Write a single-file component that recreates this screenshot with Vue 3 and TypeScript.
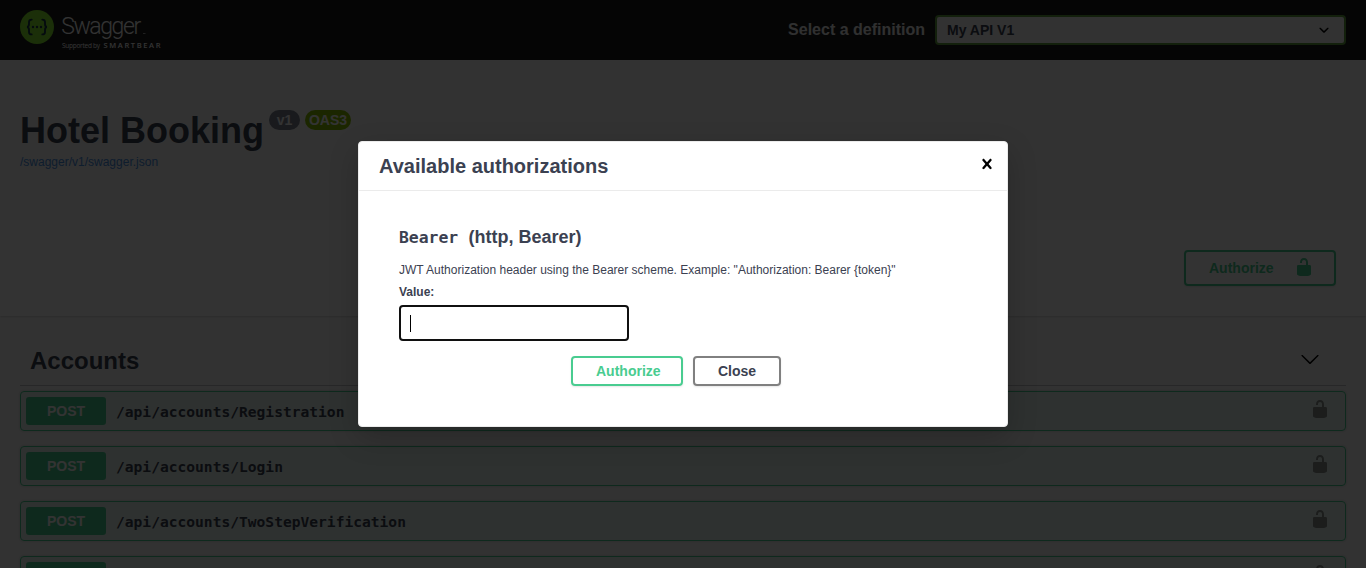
<script setup lang="ts">
interface Operation {
  id: number
  method: string
  path: string
}

const operations: Operation[] = [
  { id: 1, method: 'POST', path: '/api/accounts/Registration' },
  { id: 2, method: 'POST', path: '/api/accounts/Login' },
  { id: 3, method: 'POST', path: '/api/accounts/TwoStepVerification' },
  { id: 4, method: '', path: '' },
]

const unlocked =
  'M15.8 8H14V5.6C14 2.703 12.665 1 10 1 7.334 1 6 2.703 6 5.6V6h2v-.801C8 3.754 8.797 3 10 3c1.203 0 2 .754 2 2.199V8H4c-.553 0-1 .646-1 1.199V17c0 .549.428 1.139.951 1.307l1.197.387C5.672 18.861 6.55 19 7.1 19h5.8c.549 0 1.428-.139 1.951-.307l1.196-.387c.524-.167.953-.757.953-1.306V9.199C17 8.646 16.352 8 15.8 8z'
</script>

<template>
  <div class="page">
    <header class="topbar">
      <svg class="logo" width="150" height="44" viewBox="0 0 150 44">
        <circle cx="17" cy="17" r="17" fill="#85ea2d" />
        <g fill="none" stroke="#173647" stroke-width="1.9" stroke-linecap="round">
          <path d="M11.7 9.6c-2.4 0-2.7.9-2.7 2.5v2c0 1.700-.6 2.700-1.900 2.900 1.300.2 1.900 1.200 1.900 2.900v2c0 1.600.3 2.500 2.700 2.500" />
          <path d="M22.300 9.600c2.400 0 2.700.9 2.700 2.500v2c0 1.700.6 2.700 1.900 2.900-1.300.2-1.900 1.200-1.900 2.900v2c0 1.600-.3 2.500-2.700 2.500" />
        </g>
        <g fill="#173647">
          <circle cx="13" cy="17" r="1.200" />
          <circle cx="17" cy="17" r="1.200" />
          <circle cx="21" cy="17" r="1.200" />
        </g>
        <text class="brand" x="41.200" y="24" textLength="80">Swagger</text>
        <rect x="123" y="23" width="2.500" height="1" fill="#999" />
        <text class="sub" x="42" y="38" textLength="38">Supported by</text>
        <text class="sub bear" x="83.500" y="38" textLength="57">SMARTBEAR</text>
      </svg>
      <div class="definition">
        <span class="definition-label">Select a definition</span>
        <div class="select">
          <span>My API V1</span>
          <svg width="20" height="20" viewBox="0 0 20 20">
            <path d="M13.418 7.859c.271-.268.709-.268.978 0 .27.268.272.701 0 .969l-3.908 3.830c-.27.268-.707.268-.979 0l-3.908-3.830c-.27-.267-.27-.701 0-.969.271-.268.709-.268.978 0L10 11l3.418-3.141z" />
          </svg>
        </div>
      </div>
    </header>

    <section class="info">
      <div class="title-row">
        <h2>Hotel Booking</h2>
        <span class="pill">v1</span>
        <span class="pill oas">OAS3</span>
      </div>
      <a class="spec">/swagger/v1/swagger.json</a>
    </section>

    <section class="scheme">
      <button class="btn green main-auth">
        <span>Authorize</span>
        <svg width="20" height="20" viewBox="0 0 20 20"><path :d="unlocked" /></svg>
      </button>
    </section>

    <section class="tag">
      <div class="tag-head">
        <h3>Accounts</h3>
        <svg width="20" height="20" viewBox="0 0 20 20">
          <path d="M17.418 6.109c.272-.268.709-.268.979 0s.271.701 0 .969l-7.908 7.830c-.27.268-.707.268-.979 0l-7.908-7.830c-.27-.268-.27-.701 0-.969.271-.268.709-.268.979 0L10 13.250l7.418-7.141z" />
        </svg>
      </div>
      <div v-for="op in operations" :key="op.id" class="op">
        <span class="method">{{ op.method }}</span>
        <span class="path">{{ op.path }}</span>
        <svg width="20" height="20" viewBox="0 0 20 20"><path :d="unlocked" /></svg>
      </div>
    </section>

    <div class="backdrop">
      <div class="modal">
        <div class="modal-head">
          <h3>Available authorizations</h3>
          <svg width="20" height="20" viewBox="0 0 20 20">
            <path d="M14.348 14.849c-.469.469-1.229.469-1.697 0L10 11.819l-2.651 3.029c-.469.469-1.229.469-1.697 0-.469-.469-.469-1.229 0-1.697l2.758-3.150-2.759-3.152c-.469-.469-.469-1.228 0-1.697s1.228-.469 1.697 0L10 8.183l2.651-3.031c.469-.469 1.228-.469 1.697 0s.469 1.229 0 1.697l-2.758 3.152 2.758 3.150c.469.469.469 1.229 0 1.698z" />
          </svg>
        </div>
        <div class="modal-body">
          <h4><code>Bearer</code><span>(http, Bearer)</span></h4>
          <p>JWT Authorization header using the Bearer scheme. Example: "Authorization: Bearer {token}"</p>
          <label>Value:</label>
          <div class="field"><span class="caret"></span></div>
          <div class="actions">
            <button class="btn green">Authorize</button>
            <button class="btn">Close</button>
          </div>
        </div>
      </div>
    </div>
  </div>
</template>

<style>
body {
  margin: 0;
  overflow: hidden;
}
</style>

<style scoped>
* {
  box-sizing: border-box;
}
.page {
  position: relative;
  height: 568px;
  overflow: hidden;
  background: #fafafa;
  color: #3b4151;
  font-family: "Liberation Sans", Arial, sans-serif;
}
h2,
h3,
h4,
p {
  margin: 0;
}
svg {
  display: block;
  flex: none;
}
.topbar {
  height: 60px;
  padding: 10px 20px 0;
  background: #1b1b1b;
  display: flex;
  justify-content: space-between;
}
.brand {
  font: 300 23px Roboto, sans-serif;
  fill: #fff;
}
.sub {
  font: 400 6.5px "Open Sans", sans-serif;
  fill: #fff;
}
.bear {
  font-size: 7.5px;
  font-weight: 600;
}
.definition {
  display: flex;
  align-items: center;
  height: 40px;
}
.definition-label {
  margin-right: 10px;
  color: #f0f0f0;
  font-size: 16px;
  font-weight: 700;
}
.select {
  width: 411px;
  height: 30px;
  padding: 0 10px;
  border: 2px solid #62a03f;
  border-radius: 4px;
  background: #f7f7f7;
  display: flex;
  align-items: center;
  justify-content: space-between;
  font-size: 14px;
  font-weight: 700;
}
.info {
  height: 160px;
  padding: 50px 20px 0;
}
.title-row {
  display: flex;
  align-items: flex-start;
}
h2 {
  font-size: 36px;
  line-height: 42px;
  width: 249px;
  white-space: nowrap;
}
.pill {
  width: 31px;
  height: 20px;
  margin-right: 5px;
  border-radius: 20px;
  background: #7d8492;
  color: #fff;
  font-size: 14px;
  line-height: 20px;
  font-weight: 700;
  text-align: center;
}
.oas {
  width: 46px;
  background: #89bf04;
}
.spec {
  display: block;
  margin-top: 3px;
  color: #4990e2;
  font-size: 12px;
  line-height: 14px;
}
.scheme {
  position: relative;
  height: 96px;
  padding: 30px;
  background: #fff;
  box-shadow: 0 1px 2px rgba(0, 0, 0, 0.15);
  display: flex;
  justify-content: flex-end;
}
.btn {
  height: 30px;
  padding: 0 23px;
  border: 2px solid gray;
  border-radius: 4px;
  background: transparent;
  box-shadow: 0 1px 2px rgba(0, 0, 0, 0.1);
  color: #3b4151;
  font: 700 14px "Liberation Sans", Arial, sans-serif;
  text-align: center;
}
.green {
  border-color: #49cc90;
  color: #49cc90;
  fill: #49cc90;
}
.main-auth {
  width: 152px;
  height: 36px;
  padding: 0 20px 0 23px;
  display: flex;
  align-items: center;
  justify-content: space-between;
}
.main-auth svg {
  margin-top: -2px;
}
.tag {
  padding: 29px 20px 0;
}
.tag-head {
  height: 41px;
  margin-bottom: 5px;
  padding: 0 26px 0 10px;
  border-bottom: 1px solid rgba(59, 65, 81, 0.3);
  display: flex;
  justify-content: space-between;
}
.tag-head h3 {
  font-size: 24px;
  line-height: 32px;
}
.tag-head svg {
  margin-top: 4px;
}
.op {
  height: 40px;
  margin-bottom: 15px;
  padding: 0 15px 0 5px;
  border: 1px solid #49cc90;
  border-radius: 4px;
  background: rgba(73, 204, 144, 0.1);
  box-shadow: 0 0 3px rgba(0, 0, 0, 0.19);
  display: flex;
  align-items: center;
}
.method {
  width: 80px;
  height: 28px;
  border-radius: 3px;
  background: #49cc90;
  color: #fff;
  font-size: 14px;
  line-height: 28px;
  font-weight: 700;
  text-align: center;
}
.path {
  flex: 1;
  margin: 0 0 0 10px;
  font: 700 14.6px "DejaVu Sans Mono", monospace;
}
.op svg {
  margin-top: -5px;
  fill: #000;
  opacity: 0.4;
}
.backdrop {
  position: absolute;
  inset: 0;
  background: rgba(0, 0, 0, 0.8);
  display: flex;
  align-items: center;
  justify-content: center;
}
.modal {
  width: 650px;
  height: 286px;
  border: 1px solid #ebebeb;
  border-radius: 4px;
  background: #fff;
  box-shadow: 0 10px 30px rgba(0, 0, 0, 0.2);
}
.modal-head {
  height: 49px;
  padding: 0 10px 0 20px;
  border-bottom: 1px solid #ebebeb;
  display: flex;
  justify-content: space-between;
}
.modal-head h3 {
  font-size: 20px;
  line-height: 48px;
}
.modal-head svg {
  margin-top: 12px;
}
.modal-body {
  padding: 35px 40px 0;
}
h4 {
  display: flex;
  align-items: baseline;
  gap: 9.5px;
  height: 22px;
  font-size: 18px;
  line-height: 22px;
}
code {
  width: 60px;
  font: 700 16.4px/22px "DejaVu Sans Mono", monospace;
}
p {
  margin-top: 14px;
  font-size: 12px;
  line-height: 16px;
}
label {
  display: block;
  margin-top: 6px;
  font-size: 12px;
  line-height: 16px;
  font-weight: 700;
}
.field {
  width: 230px;
  height: 36px;
  margin-top: 5px;
  padding: 8px 9px;
  border: 2px solid #101010;
  border-radius: 4px;
}
.caret {
  display: block;
  width: 1px;
  height: 17px;
  background: #000;
}
.actions {
  display: flex;
  gap: 10px;
  margin: 15px 0 0 172px;
}
.actions .green {
  width: 112px;
}
.actions .btn:last-child {
  width: 88px;
}
</style>
